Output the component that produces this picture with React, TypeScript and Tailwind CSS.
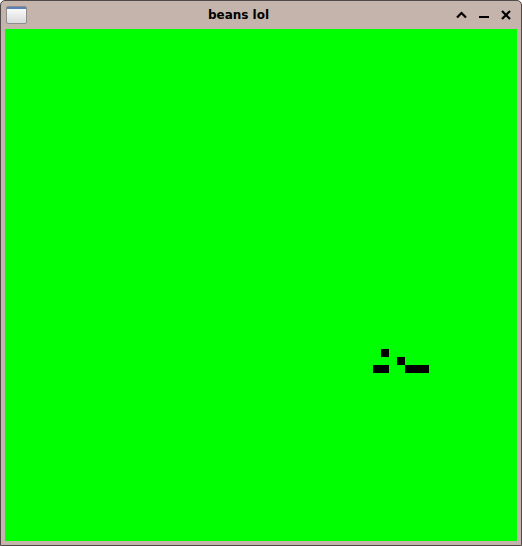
import React from "react";

const CELL = 8;

// acorn pattern, [col, row]
const liveCells: [number, number][] = [
  [47, 40],
  [49, 41],
  [46, 42],
  [47, 42],
  [50, 42],
  [51, 42],
  [52, 42],
];

const WindowIcon = () => (
  <svg width="21" height="18" viewBox="0 0 21 18">
    <defs>
      <linearGradient id="wg" x1="0" y1="0" x2="0" y2="1">
        <stop offset="0" stopColor="#ffffff" />
        <stop offset="1" stopColor="#d8d8d8" />
      </linearGradient>
    </defs>
    <rect x="0.5" y="0.5" width="20" height="17" rx="1.5" fill="url(#wg)" stroke="#8c8c8c" />
    <rect x="1" y="1" width="19" height="2" fill="#5b7fb8" />
  </svg>
);

export default function App() {
  return (
    <div className="w-[522px] h-[546px] flex flex-col bg-[#c4b4ab] border border-[#4f4a47] rounded-t-[5px] overflow-hidden">
      {/* Title bar */}
      <div className="h-[28px] flex items-center pl-[5px] pr-[10px]">
        <WindowIcon />
        <div
          className="flex-1 text-center text-[12px] font-bold text-black pr-[6px]"
          style={{ fontFamily: '"DejaVu Sans", sans-serif' }}
        >
          beans lol
        </div>
        <div className="flex items-center gap-[12px]">
          <svg width="11" height="8" viewBox="0 0 11 8">
            <path d="M1 6.5 L5.5 2 L10 6.5" stroke="#000" strokeWidth="2.2" fill="none" />
          </svg>
          <svg width="10" height="8" viewBox="0 0 10 8">
            <rect x="0" y="5" width="10" height="2" fill="#000" />
          </svg>
          <svg width="10" height="10" viewBox="0 0 10 10">
            <path d="M1 1 L9 9 M9 1 L1 9" stroke="#000" strokeWidth="2.2" fill="none" />
          </svg>
        </div>
      </div>

      {/* Life board */}
      <div className="px-[4px]">
        <div className="w-[512px] h-[512px] bg-[#00ff00] grid grid-cols-[repeat(64,8px)] grid-rows-[repeat(64,8px)]">
          {liveCells.map(([c, r]) => (
            <div
              key={`${c}-${r}`}
              className="bg-black"
              style={{ gridColumn: c + 1, gridRow: r + 1, width: CELL, height: CELL }}
            />
          ))}
        </div>
      </div>
      <div className="h-[4px]" />
    </div>
  );
}
